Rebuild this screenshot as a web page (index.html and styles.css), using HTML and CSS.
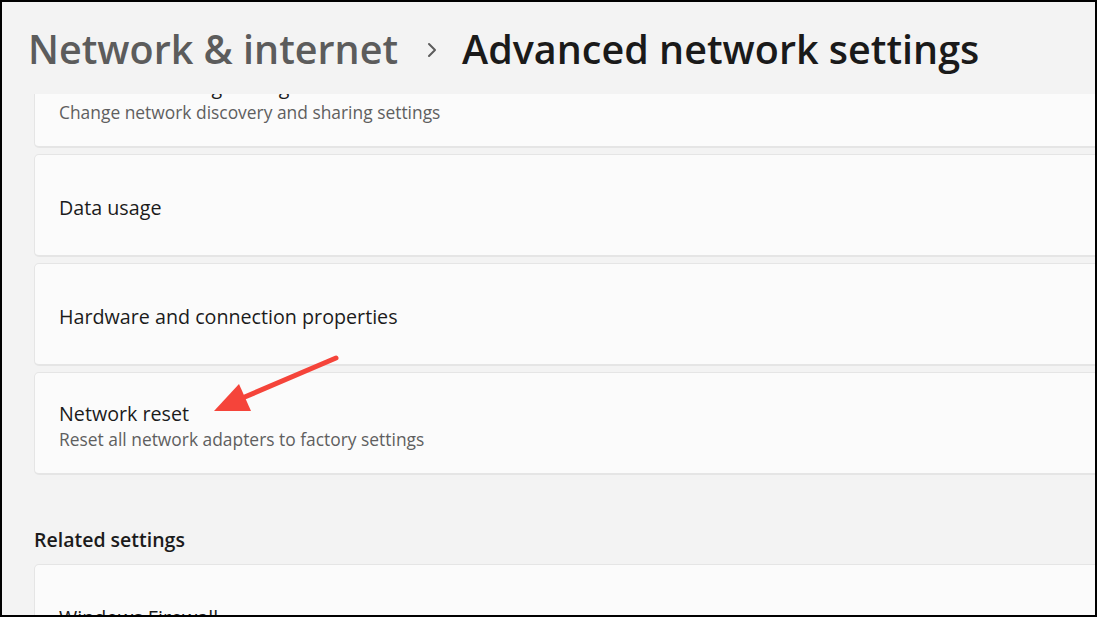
FILE: index.html
```html
<!DOCTYPE html>
<html lang="en">
<head>
    <meta charset="UTF-8">
    <meta name="viewport" content="width=device-width, initial-scale=1.0">
    <title>Advanced network settings</title>
    <link rel="stylesheet" href="styles.css">
</head>
<body>

<div id="window">
    <div id="header">
        <span class="crumb">Network &amp; internet</span>
        <svg class="chevron" width="12" height="16" viewBox="0 0 12 16">
            <path d="M3 2 L9 8 L3 14" fill="none" stroke="#5c5c5c" stroke-width="2" stroke-linecap="round" stroke-linejoin="round"/>
        </svg>
        <span class="page-title">Advanced network settings</span>
    </div>

    <div id="content">
        <div class="card first">
            <div class="card-title">Advanced sharing settings</div>
            <div class="card-desc">Change network discovery and sharing settings</div>
        </div>
        <div class="card">
            <div class="card-title">Data usage</div>
        </div>
        <div class="card">
            <div class="card-title">Hardware and connection properties</div>
        </div>
        <div class="card">
            <div class="card-title">Network reset</div>
            <div class="card-desc">Reset all network adapters to factory settings</div>
        </div>

        <h2 class="section">Related settings</h2>

        <div class="card">
            <div class="card-title">Windows Firewall</div>
        </div>
    </div>
</div>

<!-- annotation arrow drawn over the screenshot -->
<svg id="arrow" width="1097" height="617" viewBox="0 0 1097 617">
    <line x1="336" y1="358" x2="240" y2="399" stroke="#f5443a" stroke-width="5" stroke-linecap="round"/>
    <polygon points="214,411 239,384 251,411" fill="#f5443a"/>
</svg>

</body>
</html>
```

FILE: styles.css
```css
body {
    margin: 0;
    background: #000;
    font-family: "Open Sans", "Noto Sans", sans-serif;
    position: relative;
    width: 1097px;
    height: 617px;
    overflow: hidden;
}
#window {
    margin: 2px;
    height: 613px;
    width: 1093px;
    background: #f3f3f3;
    display: flex;
    flex-direction: column;
    overflow: hidden;
}
#header {
    height: 92px;
    flex-shrink: 0;
    display: flex;
    align-items: center;
    padding-left: 26px;
    padding-top: 2px;
    box-sizing: border-box;
    position: relative;
    z-index: 1;
    background: #f3f3f3;
}
.crumb {
    font-size: 39.5px;
    font-weight: 600;
    color: #5c5c5c;
}
.chevron {
    margin: 2px 24px 0 28px;
}
.page-title {
    font-size: 39.5px;
    font-weight: 600;
    color: #1a1a1a;
}
#content {
    padding-left: 32px;
    margin-right: -20px;
}
.card {
    height: 103px;
    box-sizing: border-box;
    background: #fbfbfb;
    border: 1px solid #e5e5e5;
    border-bottom-width: 2px;
    border-radius: 5px;
    margin-bottom: 6px;
    padding: 6px 0 0 24px;
    display: flex;
    flex-direction: column;
    justify-content: center;
}
.card.first {
    margin-top: -49px;
}
.card-title {
    font-size: 19.7px;
    color: #1b1b1b;
    line-height: 26px;
}
.card-desc {
    font-size: 17.4px;
    color: #5f5f5f;
    line-height: 24px;
}
.section {
    margin: 52px 0 11px 0;
    font-size: 19.5px;
    font-weight: 600;
    color: #1b1b1b;
    line-height: 26px;
}
#arrow {
    position: absolute;
    top: 0;
    left: 0;
    pointer-events: none;
}
```
